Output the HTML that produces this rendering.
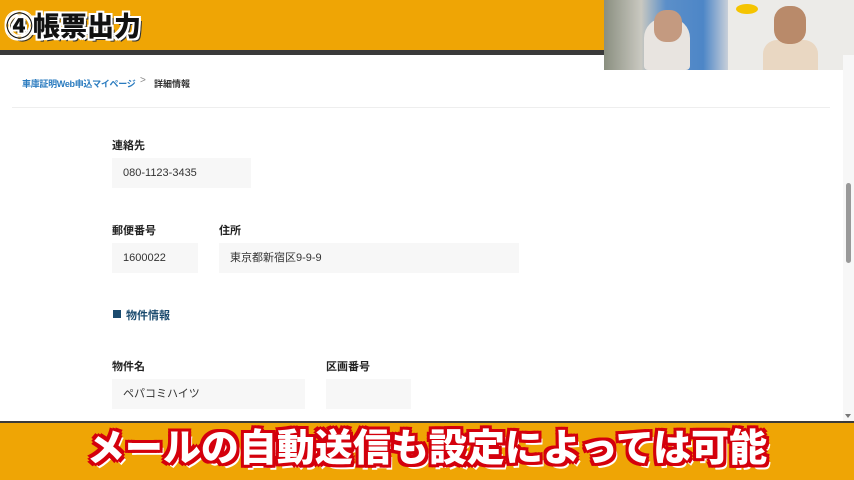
<!DOCTYPE html>
<html><head><meta charset="utf-8"><style>
*{margin:0;padding:0;box-sizing:border-box}
body{width:854px;height:480px;overflow:hidden;background:#fff;position:relative;font-family:"Liberation Sans","Noto Sans CJK JP",sans-serif}
.a{position:absolute}
.top{left:0;top:0;width:854px;height:51px;background:#efa505}
.topline{left:0;top:50px;width:854px;height:5px;background:#3a3a3a}
.title{left:6px;top:11px;font-size:27px;font-weight:900;color:#111;text-shadow:-2px -2px 0 #fff,2px -2px 0 #fff,-2px 2px 0 #fff,2px 2px 0 #fff,0 2px 0 #fff,0 -2px 0 #fff,2px 0 0 #fff,-2px 0 0 #fff,3px 3px 0 #333;line-height:32px}
.cam1{left:604px;top:0;width:124px;height:70px;background:linear-gradient(90deg,#8a8f80 0,#c9c8c0 30%,#5b8fc9 50%,#4d86c7 80%,#c8cfd9 100%)}
.cam2{left:728px;top:0;width:126px;height:70px;background:#ecebe8}
.lbl{font-size:11px;font-weight:bold;color:#222}
.box{background:#f7f7f7;font-size:11px;color:#333;padding-left:11px;line-height:30px}
.bot{left:0;top:423px;width:854px;height:57px;background:#efa505}
.botline{left:0;top:421px;width:854px;height:3px;background:#3a3a3a}
.sub{left:0;top:423px;width:854px;text-align:center;font-size:38px;font-weight:900;color:#fff;line-height:52px;letter-spacing:0px;text-shadow:-3px -3px 0 #d4000c,3px -3px 0 #d4000c,-3px 3px 0 #d4000c,3px 3px 0 #d4000c,0 3px 0 #d4000c,0 -3px 0 #d4000c,3px 0 0 #d4000c,-3px 0 0 #d4000c,4px 5px 0 #fff}
</style></head><body>
<div class="a top"></div><div class="a topline"></div>
<div class="a title">④帳票出力</div>
<div class="a cam1"><div class="a" style="left:40px;top:18px;width:46px;height:52px;border-radius:20px 20px 4px 4px;background:#e8e4e0"></div><div class="a" style="left:50px;top:10px;width:28px;height:32px;border-radius:12px;background:#c49a80"></div></div>
<div class="a cam2"><div class="a" style="left:8px;top:4px;width:22px;height:10px;border-radius:50%;background:#f5c400"></div><div class="a" style="left:35px;top:40px;width:55px;height:30px;border-radius:14px 14px 0 0;background:#e9d7c2"></div><div class="a" style="left:46px;top:6px;width:32px;height:38px;border-radius:14px;background:#b98a6a"></div></div>
<div class="a" style="left:22px;top:77px;font-size:9px;font-weight:bold;color:#2a7bbf;letter-spacing:-0.3px">車庫証明Web申込マイページ</div>
<div class="a" style="left:140px;top:75px;font-size:10px;color:#888">&gt;</div>
<div class="a" style="left:154px;top:77px;font-size:9px;font-weight:bold;color:#333">詳細情報</div>
<div class="a" style="left:12px;top:107px;width:818px;height:1px;background:#eee"></div>
<div class="a lbl" style="left:112px;top:137px">連絡先</div>
<div class="a box" style="left:112px;top:158px;width:139px;height:30px">080-1123-3435</div>
<div class="a lbl" style="left:112px;top:222px">郵便番号</div>
<div class="a lbl" style="left:219px;top:222px">住所</div>
<div class="a box" style="left:112px;top:243px;width:86px;height:30px">1600022</div>
<div class="a box" style="left:219px;top:243px;width:300px;height:30px">東京都新宿区9-9-9</div>
<div class="a" style="left:113px;top:310px;width:8px;height:8px;background:#1a4a6e"></div>
<div class="a" style="left:126px;top:307px;font-size:11px;font-weight:bold;color:#1a4a6e">物件情報</div>
<div class="a lbl" style="left:112px;top:358px">物件名</div>
<div class="a lbl" style="left:326px;top:358px">区画番号</div>
<div class="a box" style="left:112px;top:379px;width:193px;height:30px">ペパコミハイツ</div>
<div class="a box" style="left:326px;top:379px;width:85px;height:30px"></div>
<div class="a" style="left:843px;top:55px;width:11px;height:366px;background:#f7f7f7"></div>
<div class="a" style="left:846px;top:183px;width:5px;height:80px;border-radius:3px;background:#999"></div>
<div class="a" style="left:845px;top:414px;width:0;height:0;border-left:3px solid transparent;border-right:3px solid transparent;border-top:4px solid #777"></div>
<div class="a botline"></div><div class="a bot"></div>
<div class="a sub">メールの自動送信も設定によっては可能</div>
</body></html>
